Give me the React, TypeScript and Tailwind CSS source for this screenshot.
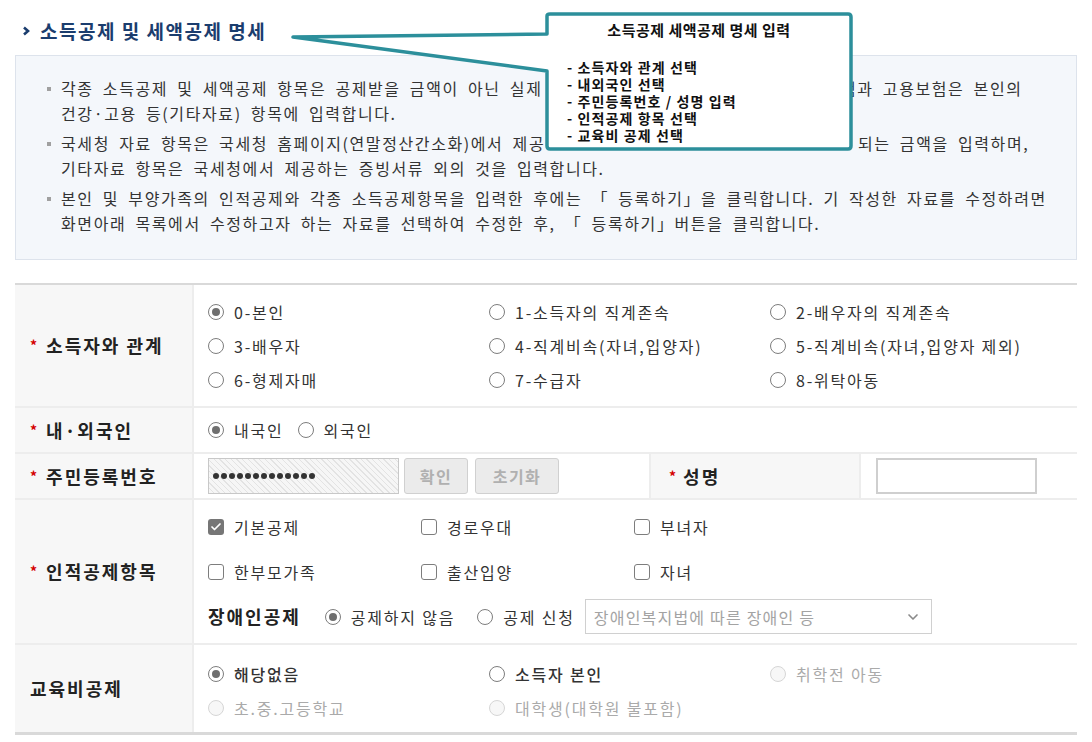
import { Check, ChevronDown } from 'lucide-react'

const opt = 'text-[16px] tracking-[1.8px] text-[#333] whitespace-nowrap'
const lbl = 'text-[18px] font-bold tracking-[2px] text-[#222] whitespace-nowrap'
const info = 'text-[16px] leading-[25px] tracking-[1.6px] [word-spacing:4px] text-[#333] whitespace-nowrap'

function Radio({ checked, disabled }: { checked?: boolean; disabled?: boolean }) {
  return (
    <span
      className={`w-4 h-4 rounded-full border flex items-center justify-center shrink-0 ${
        disabled ? 'border-[#d6d6d6] bg-[#f7f7f7]' : 'border-[#7d7d7d] bg-white'
      }`}
    >
      {checked && <span className="w-[8px] h-[8px] rounded-full bg-[#6f6f6f]" />}
    </span>
  )
}

function RadioOpt({ text, checked, disabled, dark }: { text: string; checked?: boolean; disabled?: boolean; dark?: boolean }) {
  return (
    <div className="flex items-center gap-[10px]">
      <Radio checked={checked} disabled={disabled} />
      <span className={`${opt} ${disabled ? 'text-[#aaa]' : dark ? 'text-[#1e1e1e] font-medium' : ''}`}>{text}</span>
    </div>
  )
}

function CheckOpt({ text, checked }: { text: string; checked?: boolean }) {
  return (
    <div className="flex items-center gap-[10px]">
      {checked ? (
        <span className="w-4 h-4 rounded-[3px] bg-[#767676] flex items-center justify-center">
          <Check size={12} strokeWidth={3.5} color="#fff" />
        </span>
      ) : (
        <span className="w-4 h-4 rounded-[3px] border border-[#7d7d7d] bg-white" />
      )}
      <span className={opt}>{text}</span>
    </div>
  )
}

function Label({ text, star = true }: { text: string; star?: boolean }) {
  return (
    <div className="w-[179px] shrink-0 bg-[#f7f7f7] border-r-2 border-[#ededed] flex items-center pl-[15px]">
      {star && <span className="text-[#d40000] text-[14px] font-bold mr-[9px]">*</span>}
      <span className={lbl}>{text}</span>
    </div>
  )
}

function Bullet({ children }: { children: React.ReactNode }) {
  return (
    <div className="flex mb-[5px]">
      <span className="w-[4px] h-[4px] bg-[#a0a0a0] mt-[11px] shrink-0" />
      <div className="ml-[10px]">{children}</div>
    </div>
  )
}

export default function App() {
  return (
    <div className="relative w-[1092px] h-[742px] bg-white overflow-hidden px-[15px] font-['Noto_Sans_CJK_KR',sans-serif]">
      {/* Title */}
      <div className="mt-[20px] h-[22px] flex items-center pl-[7px] gap-[10px]">
        <svg width="8" height="10" viewBox="0 0 8 10">
          <polyline points="2,1.5 6,5 2,8.5" fill="none" stroke="#1b3d6e" strokeWidth="2.6" />
        </svg>
        <span className="text-[19px] font-bold tracking-[1.5px] text-[#1b3d6e]">소득공제 및 세액공제 명세</span>
      </div>

      {/* Info box */}
      <div className="mt-[13px] h-[205px] border border-[#dde3ec] bg-[#f4f7fb] pt-[20px] pl-[31px]">
        <Bullet>
          <div className={`${info} grid grid-cols-[780px_auto] justify-items-start`}>
            <span>각종 소득공제 및 세액공제 항목은 공제받을 금액이 아닌 실제</span>
            <span>험과 고용보험은 본인의</span>
          </div>
          <div className={info}>건강·고용 등(기타자료) 항목에 입력합니다.</div>
        </Bullet>
        <Bullet>
          <div className={`${info} grid grid-cols-[797px_auto] justify-items-start`}>
            <span>국세청 자료 항목은 국세청 홈페이지(연말정산간소화)에서 제공</span>
            <span>되는 금액을 입력하며,</span>
          </div>
          <div className={info}>기타자료 항목은 국세청에서 제공하는 증빙서류 외의 것을 입력합니다.</div>
        </Bullet>
        <Bullet>
          <div className={info}>
            본인 및 부양가족의 인적공제와 각종 소득공제항목을 입력한 후에는 「 등록하기」을 클릭합니다. 기 작성한 자료를 수정하려면
          </div>
          <div className={info}>화면아래 목록에서 수정하고자 하는 자료를 선택하여 수정한 후, 「 등록하기」버튼을 클릭합니다.</div>
        </Bullet>
      </div>

      {/* Form table */}
      <div className="mt-[23px] border-t-2 border-b-[3px] border-[#d9d9d9]">
        {/* 소득자와 관계 */}
        <div className="flex h-[123px] border-b-2 border-[#ededed]">
          <Label text="소득자와 관계" />
          <div className="flex-1 pl-[14px] pt-[10px] grid grid-cols-[281px_281px_281px] auto-rows-[34px] items-center">
            <RadioOpt text="0-본인" checked />
            <RadioOpt text="1-소득자의 직계존속" />
            <RadioOpt text="2-배우자의 직계존속" />
            <RadioOpt text="3-배우자" />
            <RadioOpt text="4-직계비속(자녀,입양자)" />
            <RadioOpt text="5-직계비속(자녀,입양자 제외)" />
            <RadioOpt text="6-형제자매" />
            <RadioOpt text="7-수급자" />
            <RadioOpt text="8-위탁아동" />
          </div>
        </div>

        {/* 내외국인 */}
        <div className="flex h-[46px] border-b-2 border-[#ededed]">
          <Label text="내·외국인" />
          <div className="flex-1 pl-[14px] flex items-center gap-[14px]">
            <RadioOpt text="내국인" checked />
            <RadioOpt text="외국인" />
          </div>
        </div>

        {/* 주민등록번호 / 성명 */}
        <div className="flex h-[46px] border-b-2 border-[#ededed]">
          <Label text="주민등록번호" />
          <div className="w-[455px] shrink-0 pl-[14px] flex items-center">
            <div className="w-[191px] h-[36px] border border-[#c8c8c8] flex items-center pl-[4px] gap-[2px] bg-[repeating-linear-gradient(45deg,#f6f6f6_0px,#f6f6f6_3px,#e3e3e3_3px,#e3e3e3_4px)]">
              {Array.from({ length: 13 }).map((_, i) => (
                <span key={i} className="w-[6px] h-[6px] rounded-full bg-[#333]" />
              ))}
            </div>
            <button className="ml-[5px] w-[64px] h-[36px] rounded-[3px] border border-[#d0d0d0] bg-[#ebebeb] text-[16px] font-bold tracking-[1.5px] text-[#b0b0b0]">
              확인
            </button>
            <button className="ml-[7px] w-[84px] h-[36px] rounded-[3px] border border-[#d0d0d0] bg-[#ebebeb] text-[16px] font-bold tracking-[1.5px] text-[#b0b0b0]">
              초기화
            </button>
          </div>
          <div className="w-[212px] shrink-0 bg-[#f7f7f7] border-x-2 border-[#ededed] flex items-center pl-[18px]">
            <span className="text-[#d40000] text-[14px] font-bold mr-[7px]">*</span>
            <span className={lbl}>성명</span>
          </div>
          <div className="flex-1 pl-[15px] flex items-center">
            <div className="w-[161px] h-[36px] border-2 border-[#cfcfcf] bg-white" />
          </div>
        </div>

        {/* 인적공제항목 */}
        <div className="flex h-[145px] border-b-2 border-[#ededed]">
          <Label text="인적공제항목" />
          <div className="flex-1 pl-[14px] pt-[4px]">
            <div className="grid grid-cols-[213px_213px_213px] auto-rows-[45px] items-center">
              <CheckOpt text="기본공제" checked />
              <CheckOpt text="경로우대" />
              <CheckOpt text="부녀자" />
              <CheckOpt text="한부모가족" />
              <CheckOpt text="출산입양" />
              <CheckOpt text="자녀" />
            </div>
            <div className="h-[45px] flex items-center">
              <span className="text-[18px] font-bold tracking-[2px] text-[#222] mr-[24px]">장애인공제</span>
              <RadioOpt text="공제하지 않음" checked />
              <div className="ml-[22px]">
                <RadioOpt text="공제 신청" />
              </div>
              <div className="ml-[10px] w-[347px] h-[35px] border border-[#d0d0d0] bg-white flex items-center justify-between pl-[8px] pr-[10px]">
                <span className="text-[16px] tracking-[1.2px] text-[#a3a3a3]">장애인복지법에 따른 장애인 등</span>
                <ChevronDown size={16} strokeWidth={2.5} color="#8a8a8a" />
              </div>
            </div>
          </div>
        </div>

        {/* 교육비공제 */}
        <div className="flex h-[87px]">
          <Label text="교육비공제" star={false} />
          <div className="flex-1 pl-[14px] pt-[12px] grid grid-cols-[281px_281px_281px] auto-rows-[34px] content-start items-center">
            <RadioOpt text="해당없음" checked dark />
            <RadioOpt text="소득자 본인" dark />
            <RadioOpt text="취학전 아동" disabled />
            <RadioOpt text="초.중.고등학교" disabled />
            <RadioOpt text="대학생(대학원 불포함)" disabled />
          </div>
        </div>
      </div>

      {/* Callout */}
      <svg className="absolute left-0 top-0 pointer-events-none" width="1092" height="160">
        <path
          d="M 547 16 Q 547 14 550 14 H 848 Q 851 14 851 17 V 146 Q 851 149 848 149 H 550 Q 547 149 547 146 V 71 L 293 37 L 547 34 Z"
          fill="#fff"
          stroke="#2c8f9b"
          strokeWidth="3.5"
          strokeLinejoin="round"
        />
      </svg>
      <div className="absolute left-[549px] top-[20px] w-[300px] text-[#111]">
        <div className="text-center text-[15px] leading-[20px] font-bold tracking-[0.5px]">소득공제 세액공제 명세 입력</div>
        <div className="mt-[19px] pl-[18px] text-[14px] leading-[17px] font-bold tracking-[1.1px]">
          <div className="h-[17px]">- 소득자와 관계 선택</div>
          <div className="h-[17px]">- 내외국인 선택</div>
          <div className="h-[17px]">- 주민등록번호 / 성명 입력</div>
          <div className="h-[17px]">- 인적공제 항목 선택</div>
          <div className="h-[17px]">- 교육비 공제 선택</div>
        </div>
      </div>
    </div>
  )
}
